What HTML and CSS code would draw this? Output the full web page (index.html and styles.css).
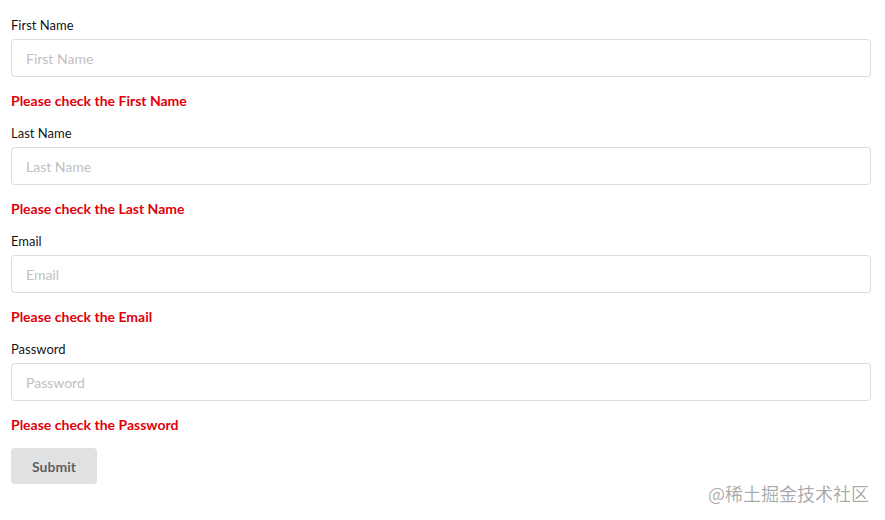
FILE: index.html
```html
<!DOCTYPE html>
<html lang="en">
<head>
<meta charset="utf-8">
<title>Form</title>
<link rel="stylesheet" href="styles.css">
</head>
<body>
<form class="form">
  <div class="field">
    <label class="label">First Name</label>
    <input class="input" type="text" placeholder="First Name">
    <div class="error">Please check the First Name</div>
  </div>
  <div class="field">
    <label class="label">Last Name</label>
    <input class="input" type="text" placeholder="Last Name">
    <div class="error">Please check the Last Name</div>
  </div>
  <div class="field">
    <label class="label">Email</label>
    <input class="input" type="text" placeholder="Email">
    <div class="error">Please check the Email</div>
  </div>
  <div class="field">
    <label class="label">Password</label>
    <input class="input" type="password" placeholder="Password">
    <div class="error">Please check the Password</div>
  </div>
  <div class="footer">
    <button class="button" type="button">Submit</button>
    <span class="watermark">@稀土掘金技术社区</span>
  </div>
</form>
</body>
</html>
```
FILE: styles.css
```css
html, body {
  margin: 0;
  padding: 0;
  background: #fff;
}
body {
  font-family: Lato, "Noto Sans", sans-serif;
  color: #000;
}
.form {
  display: flex;
  flex-direction: column;
  gap: 17px;
  padding: 18px 14px 0 11px;
}
.field {
  display: flex;
  flex-direction: column;
}
.label {
  font-size: 13px;
  line-height: 15px;
  font-weight: 400;
  color: rgba(0,0,0,0.95);
  margin-bottom: 6px;
}
.input {
  box-sizing: border-box;
  height: 38px;
  width: 100%;
  margin: 0;
  padding: 0 14px;
  border: 1px solid rgba(34,36,38,0.15);
  border-radius: 4px;
  font-family: Lato, "Noto Sans", sans-serif;
  font-size: 14px;
  color: rgba(0,0,0,0.87);
  outline: none;
}
.input::placeholder {
  color: #bfbfbf;
}
.error {
  margin-top: 15px;
  font-size: 14px;
  line-height: 17px;
  font-weight: 700;
  color: #e0000b;
}
.footer {
  display: flex;
  align-items: flex-start;
  justify-content: space-between;
  margin-top: -2px;
}
.button {
  width: 86px;
  height: 36px;
  border: none;
  border-radius: 4px;
  background: #e0e1e2;
  color: rgba(0,0,0,0.6);
  font-family: Lato, "Noto Sans", sans-serif;
  font-size: 14px;
  font-weight: 700;
  padding: 0;
}
.watermark {
  margin-top: 34px;
  margin-right: 2px;
  font-family: "Noto Sans CJK SC", sans-serif;
  font-size: 18px;
  line-height: 22px;
  color: rgba(0,0,0,0.35);
}
```
